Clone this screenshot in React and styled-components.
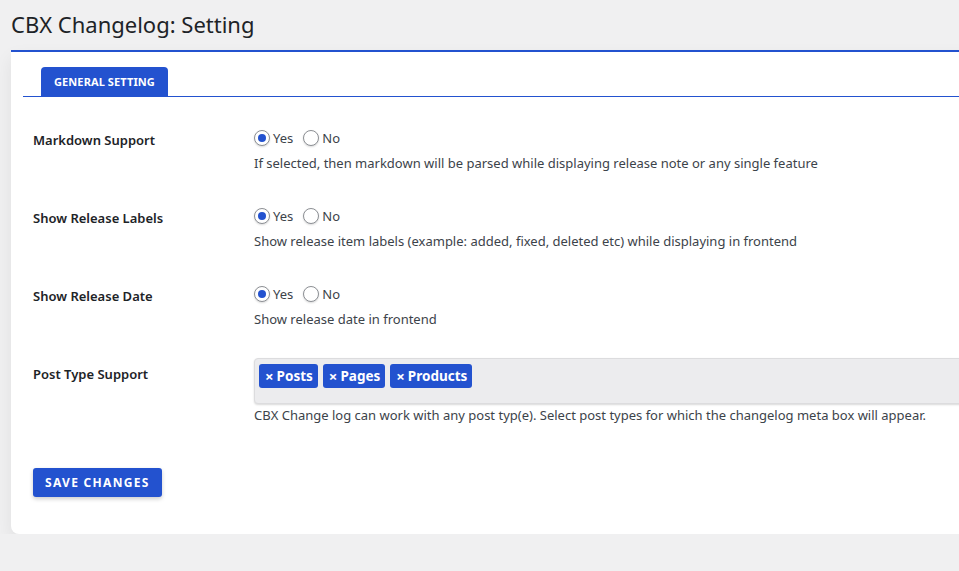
import React, { useState } from "react";
import styled, { createGlobalStyle } from "styled-components";

const GlobalStyle = createGlobalStyle`
  html, body {
    margin: 0;
    padding: 0;
    background: #f0f0f1;
    overflow: hidden;
  }
  body {
    font-family: "Noto Sans", "Open Sans", sans-serif;
    color: #1d2327;
  }
`;

const blue = "#2352cf";

const rows = [
  {
    key: "markdown",
    label: "Markdown Support",
    desc: "If selected, then markdown will be parsed while displaying release note or any single feature",
  },
  {
    key: "labels",
    label: "Show Release Labels",
    desc: "Show release item labels (example: added, fixed, deleted etc) while displaying in frontend",
  },
  {
    key: "date",
    label: "Show Release Date",
    desc: "Show release date in frontend",
  },
];

const App = () => {
  const [values, setValues] = useState({ markdown: "yes", labels: "yes", date: "yes" });
  const [types, setTypes] = useState(["Posts", "Pages", "Products"]);

  const setValue = (key, v) => setValues({ ...values, [key]: v });

  return (
    <Wrap>
      <GlobalStyle />
      <Title>CBX Changelog: Setting</Title>
      <Card>
        <TabNav>
          <Tab>General Setting</Tab>
        </TabNav>
        <Form>
          {rows.map((row) => (
            <Row key={row.key}>
              <Label>{row.label}</Label>
              <Field>
                <Radios>
                  <RadioLabel>
                    <Radio
                      type="radio"
                      checked={values[row.key] === "yes"}
                      onChange={() => setValue(row.key, "yes")}
                    />
                    Yes
                  </RadioLabel>
                  <RadioLabel>
                    <Radio
                      type="radio"
                      checked={values[row.key] === "no"}
                      onChange={() => setValue(row.key, "no")}
                    />
                    No
                  </RadioLabel>
                </Radios>
                <Desc>{row.desc}</Desc>
              </Field>
            </Row>
          ))}
          <Row>
            <Label>Post Type Support</Label>
            <Field>
              <SelectBox>
                {types.map((t) => (
                  <TagChip key={t} onClick={() => setTypes(types.filter((x) => x !== t))}>
                    <span className="x">×</span>
                    {t}
                  </TagChip>
                ))}
              </SelectBox>
              <Desc $tight>
                CBX Change log can work with any post typ(e). Select post types for which the changelog meta box will appear.
              </Desc>
            </Field>
          </Row>
          <Actions>
            <SaveButton type="button">Save Changes</SaveButton>
          </Actions>
        </Form>
      </Card>
    </Wrap>
  );
};

const Wrap = styled.div`
  padding: 9px 0 0 11px;
  width: 1000px;
`;

const Title = styled.h1`
  margin: 0 0 10px;
  font-size: 22px;
  font-weight: 400;
  line-height: 31px;
  color: #1d2327;
`;

const Card = styled.div`
  background: #fff;
  border-top: 2px solid ${blue};
  border-radius: 0 0 0 8px;
  box-shadow: 0 8px 18px rgba(0, 0, 0, 0.07);
  padding: 15px 0 37px 12px;
`;

const TabNav = styled.div`
  display: flex;
  border-bottom: 1px solid ${blue};
  padding-left: 18px;
`;

const Tab = styled.div`
  background: ${blue};
  color: #fff;
  font-size: 11px;
  font-weight: 700;
  text-transform: uppercase;
  height: 29px;
  line-height: 29px;
  padding: 0 13px;
  border-radius: 4px 4px 0 0;
  letter-spacing: 0.1px;
`;

const Form = styled.div`
  padding: 13px 0 0 10px;
`;

const Row = styled.div`
  display: grid;
  grid-template-columns: 221px 1fr;
  padding: 0 0 15px;
`;

const Label = styled.div`
  padding-top: 20px;
  font-size: 13px;
  font-weight: 600;
  line-height: 20px;
  color: #1d2327;
`;

const Field = styled.div`
  padding-top: 16px;
`;

const Radios = styled.div`
  display: flex;
  align-items: center;
  gap: 10px;
  height: 24px;
`;

const RadioLabel = styled.label`
  display: flex;
  align-items: center;
  gap: 3px;
  font-size: 13px;
  color: #3c434a;
  cursor: pointer;
`;

const Radio = styled.input`
  appearance: none;
  margin: 0;
  width: 16px;
  height: 16px;
  border: 1px solid #8c8f94;
  border-radius: 50%;
  background: #fff;
  box-shadow: 0 1px 2px rgba(0, 0, 0, 0.15);
  display: grid;
  place-items: center;
  cursor: pointer;
  &:checked::before {
    content: "";
    width: 8px;
    height: 8px;
    border-radius: 50%;
    background: ${blue};
  }
`;

const Desc = styled.p`
  margin: ${(p) => (p.$tight ? "1px" : "3px")} 0 0;
  font-size: 13px;
  line-height: 20px;
  color: #3c434a;
`;

const SelectBox = styled.div`
  display: flex;
  align-items: flex-start;
  gap: 5px;
  height: 46px;
  box-sizing: border-box;
  padding: 5px 4px;
  margin-top: -2px;
  background: #ececee;
  border: 1px solid #dcdcde;
  border-radius: 4px 0 0 4px;
  box-shadow: 0 1px 2px rgba(0, 0, 0, 0.15);
`;

const TagChip = styled.span`
  display: inline-flex;
  align-items: center;
  height: 24px;
  padding: 0 5px 0 6px;
  background: ${blue};
  color: #fff;
  font-size: 13.5px;
  font-weight: 700;
  border-radius: 3px;
  cursor: pointer;
  .x {
    font-size: 15px;
    margin-right: 3px;
  }
`;

const Actions = styled.div`
  padding-top: 28px;
`;

const SaveButton = styled.button`
  background: ${blue};
  color: #fff;
  border: none;
  border-radius: 3px;
  height: 29px;
  padding: 0 12px;
  font-family: inherit;
  font-size: 12px;
  font-weight: 700;
  letter-spacing: 1.3px;
  text-transform: uppercase;
  box-shadow: 0 2px 4px rgba(0, 0, 0, 0.2);
  cursor: pointer;
`;

export default App;
